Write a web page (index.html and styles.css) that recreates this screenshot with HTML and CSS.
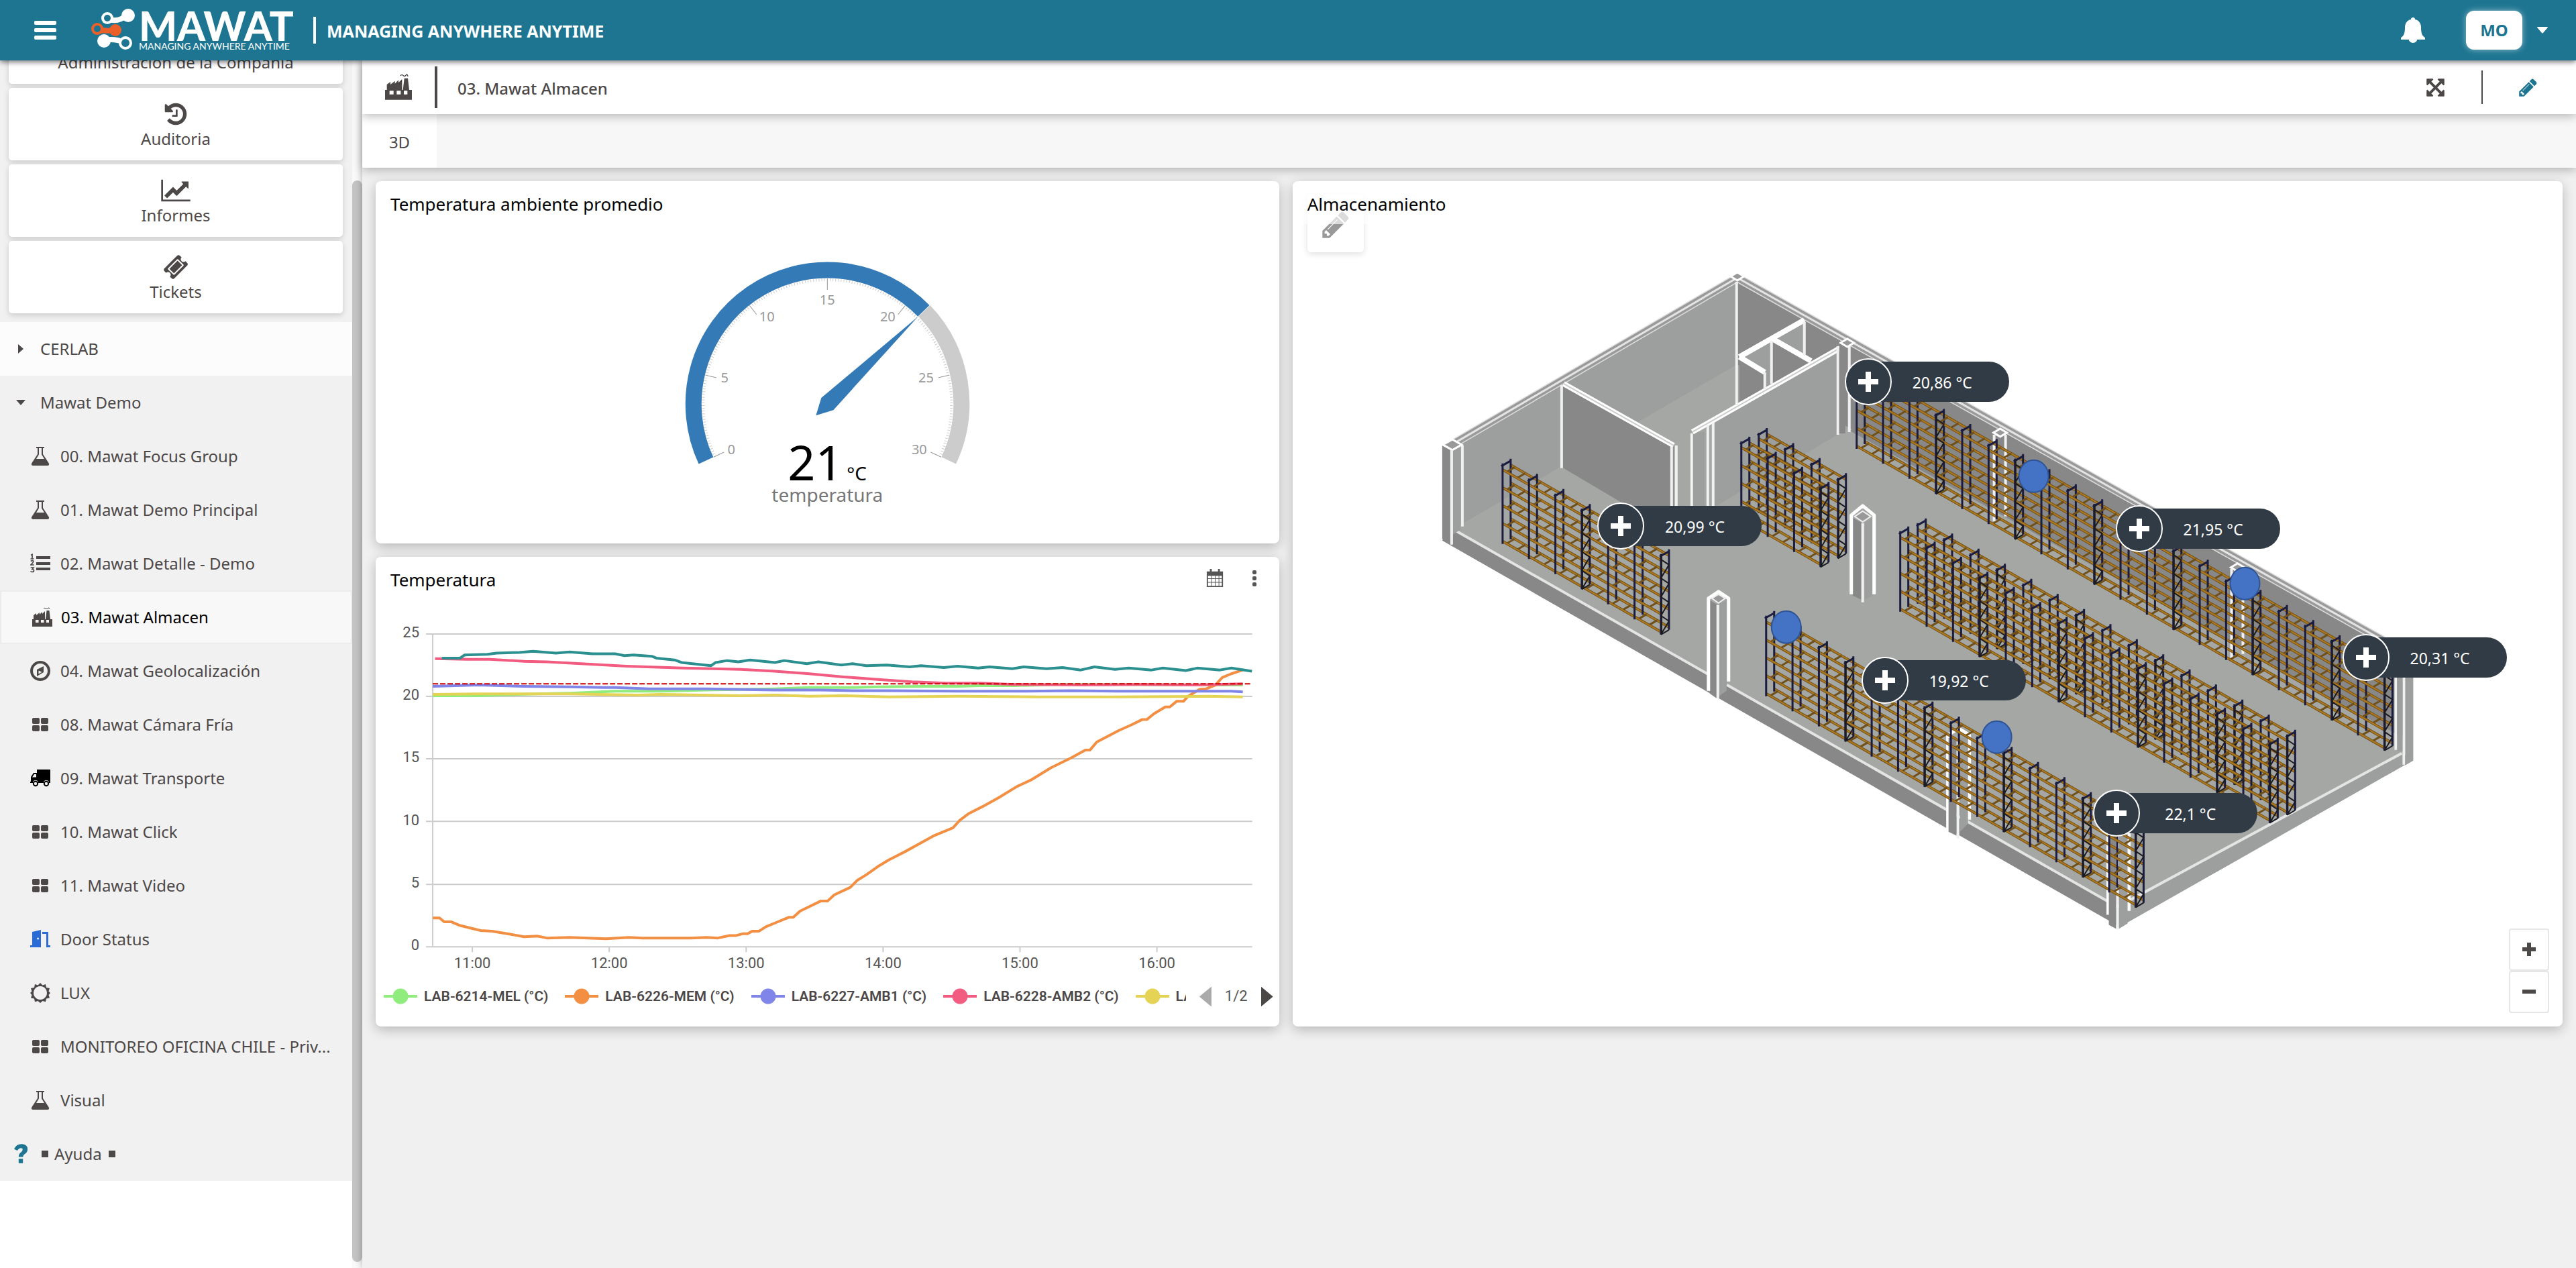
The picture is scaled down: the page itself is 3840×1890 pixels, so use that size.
FILE: index.html
```html
<!DOCTYPE html>
<html lang="es">
<head>
<meta charset="utf-8">
<title>Mawat - 03. Mawat Almacen</title>
<link rel="stylesheet" href="styles.css">
</head>
<body>
<svg class="defs" aria-hidden="true">
  <symbol id="i-pencil" viewBox="0 0 1792 1792"><path d="M491 1536l91-91-235-235-91 91v107h128v128h107zm523-928q0-22-22-22-10 0-17 7l-542 542q-7 7-7 17 0 22 22 22 10 0 17-7l542-542q7-7 7-17zm-54-192l416 416-832 832h-416v-416zm683 96q0 53-37 90l-166 166-416-416 166-165q36-38 90-38 53 0 91 38l235 234q37 39 37 91z"/></symbol>
  <symbol id="i-history" viewBox="0 0 1792 1792"><path d="M1664 896q0 156-61 298t-164 245-245 164-298 61q-172 0-327-72.5t-264-204.5q-7-10-6.5-22.5t8.5-20.5l137-138q10-9 25-9 16 2 23 12 73 95 179 147t225 52q104 0 198.5-40.5t163.5-109.5 109.5-163.5 40.5-198.5-40.5-198.5-109.5-163.5-163.5-109.5-198.5-40.5q-98 0-188 35.5t-160 101.5l137 138q31 30 14 69-17 40-59 40h-448q-26 0-45-19t-19-45v-448q0-42 40-59 39-17 69 14l130 129q107-101 244.5-156.5t284.5-55.5q156 0 298 61t245 164 164 245 61 298zm-640-288v448q0 14-9 23t-23 9h-320q-14 0-23-9t-9-23v-64q0-14 9-23t23-9h224v-352q0-14 9-23t23-9h64q14 0 23 9t9 23z"/></symbol>
  <symbol id="i-chart" viewBox="0 0 2048 1792"><path d="M2048 1536v128h-2048v-1536h128v1408h1920zm-128-1248v435q0 21-19.5 29.5t-35.5-7.5l-121-121-633 633q-10 10-23 10t-23-10l-233-233-416 416-192-192 585-585q10-10 23-10t23 10l233 233 464-464-121-121q-16-16-7.5-35.5t29.5-19.5h435q14 0 23 9t9 23z"/></symbol>
  <symbol id="i-ticket" viewBox="0 0 1792 1792"><path d="M1024 452l316 316-572 572-316-316zm-211 979l618-618q19-19 19-45t-19-45l-362-362q-18-18-45-18t-45 18l-618 618q-19 19-19 45t19 45l362 362q18 18 45 18t45-18zm889-637l-907 908q-37 37-90.5 37t-90.5-37l-126-126q56-56 56-136t-56-136-136-56-136 56l-125-126q-37-37-37-90.5t37-90.5l907-906q37-37 90.5-37t90.5 37l125 125q-56 56-56 136t56 136 136 56 136-56l126 125q37 37 37 90.5t-37 90.5z"/></symbol>
  <symbol id="i-expand" viewBox="0 0 1792 1792"><path d="M1411 541l-355 355 355 355 144-144q29-31 70-14 39 17 39 59v448q0 26-19 45t-45 19h-448q-42 0-59-40-17-39 14-69l144-144-355-355-355 355 144 144q31 30 14 69-17 40-59 40h-448q-26 0-45-19t-19-45v-448q0-42 40-59 39-17 69 14l144 144 355-355-355-355-144 144q-19 19-45 19-12 0-24-5-40-17-40-59v-448q0-26 19-45t45-19h448q42 0 59 40 17 39-14 69l-144 144 355 355 355-355-144-144q-31-30-14-69 17-40 59-40h448q26 0 45 19t19 45v448q0 42-39 59-13 5-25 5-26 0-45-19z"/></symbol>
  <symbol id="i-grid" viewBox="0 0 30 30"><rect x="3" y="5" width="11" height="9" rx="2"/><rect x="16" y="5" width="11" height="9" rx="2"/><rect x="3" y="16" width="11" height="9" rx="2"/><rect x="16" y="16" width="11" height="9" rx="2"/></symbol>
  <symbol id="i-flask" viewBox="0 0 30 30"><path d="M9 1h12v2h-2v9l8.500 13q2 4-2 4H4.500q-4 0-2-4L11 12V3H9zM13 3v9.600L9 19h12l-4-6.400V3z" fill-rule="evenodd"/></symbol>
  <symbol id="i-list" viewBox="0 0 30 30"><path d="M9 4h21v4H9zM9 13h21v4H9zM9 21h21v4H9z"/><g fill="none" stroke="currentColor" stroke-width="1.700"><path d="M1 2.500l2-1V8M.500 8h5M.800 11.500q4-2 4 .500 0 1-4 5h5M.800 21h4.200l-2 2.500q2.500 0 2.500 2t-2.500 2q-1.500 0-2.500-1"/></g></symbol>
  <symbol id="i-factory" viewBox="0 0 30 30"><path d="M0 29V18h2v-6l4-3v3l5-4v3l4-4v3l4-4v12h1L21.500 5h4L27 18h3v11zM5 19v4h4.500v-4zm8 0v4h4.500v-4zm8 0v4h4v-4z" fill-rule="evenodd"/><path d="M17 2q2-1.500 3.500 0t3-.5 2 1.500" fill="none" stroke="currentColor"/></symbol>
  <symbol id="i-compass" viewBox="0 0 30 30"><path d="M15 0a15 15 0 1 0 .01 0zM15 4a11 11 0 1 1-.01 0zM20 8v9l-10 6v-10zM12.500 14.500v5l5-2.700z" fill-rule="evenodd"/></symbol>
  <symbol id="i-truck" viewBox="0 0 30 30"><path d="M10 2h20v20h-2a4 4 0 0 0-8 0h-8a4 4 0 0 0-8 0H0v-2h1v-7l4-6h5zM9 9H6l-3 4.500h6z" fill-rule="evenodd"/><circle cx="8" cy="23" r="3.200" fill="none" stroke="currentColor" stroke-width="2"/><circle cx="24" cy="23" r="3.200" fill="none" stroke="currentColor" stroke-width="2"/></symbol>
  <symbol id="i-door" viewBox="0 0 30 30"><path d="M3 4l13-3v26H0v-3h3zM11.500 12.500a1.500 1.500 0 1 0 .01 3 1.500 1.500 0 1 0 0-3zM18 4h9v20h3v3h-6V7h-6z" fill-rule="evenodd"/></symbol>
  <symbol id="i-sun" viewBox="0 0 30 30"><path d="M15 0l3.500 3.500 4.500-1.500 1 5 5 1-1.500 4.500L30 15l-2.500 3L29 22.500l-5 1-1 4.800-4.500-1.300L15 30l-3.500-3L7 28.300l-1-4.800-5-1L2.500 18 0 15l2.500-2.500L1 8l5-1 1-5 4.500 1.500zM15 5a10 10 0 1 0 .01 0z" fill-rule="evenodd"/></symbol>
  <symbol id="i-question" viewBox="0 0 24 32"><path d="M1 8Q5 0 13 0q10 0 10 8.500 0 4.500-4.500 7.500-3 2-3 5H8.500q0-5 3.500-7.500 3-2 3-4.500 0-2.500-3-2.500-3 0-5.500 4zM8.500 24h7v7h-7z"/></symbol>
  <symbol id="i-calendar" viewBox="0 0 28 30"><path d="M1 4h5V0h3v4h10V0h3v4h5v25H1zM3 11v4h5v-4zm6 0v4h5v-4zm6 0v4h5v-4zm6 0v4h4v-4zM3 16v5h5v-5zm6 0v5h5v-5zm6 0v5h5v-5zm6 0v5h4v-5zM3 22v5h5v-5zm6 0v5h5v-5zm6 0v5h5v-5zm6 0v5h4v-5z" fill-rule="evenodd"/></symbol>
</svg>

<header class="topbar">
  <button class="menu-btn" aria-label="Menú"><span></span><span></span><span></span></button>
  <svg class="logo" viewBox="0 0 304 64" role="img" aria-label="Mawat">
    <g stroke-linecap="round" fill="none">
      <path d="M25 15Q40 21 52 11" stroke="#fff" stroke-width="8"/>
      <path d="M10 31Q24 34 36 32" stroke="#eb6029" stroke-width="8"/>
      <path d="M20 47Q36 44 50 50" stroke="#fff" stroke-width="8"/>
    </g>
    <circle cx="25" cy="14" r="9" fill="#fff"/><circle cx="25" cy="14" r="5" fill="#1d7591"/>
    <circle cx="56" cy="10" r="10" fill="#fff"/>
    <circle cx="10" cy="30" r="9" fill="#eb6029"/><circle cx="10" cy="30" r="5" fill="#1d7591"/>
    <circle cx="37" cy="32" r="9" fill="#eb6029"/>
    <circle cx="20" cy="48" r="10" fill="#fff"/>
    <circle cx="52" cy="51" r="10" fill="#fff"/><circle cx="52" cy="51" r="6" fill="#1d7591"/>
    <text class="logo-name" x="72" y="48">MAWAT</text>
    <text class="logo-sub" x="72" y="61">MANAGING ANYWHERE ANYTIME</text>
  </svg>
  <span class="topbar-rule"></span>
  <span class="slogan">MANAGING ANYWHERE ANYTIME</span>
  <button class="bell" aria-label="Notificaciones"><svg viewBox="0 0 36 38"><path d="M18 0c-2 0-3 1-3 3C9 4 6 9 6 15c0 9-2 13-6 15v3h36v-3c-4-2-6-6-6-15 0-6-3-11-9-12 0-2-1-3-3-3zM12 33a6 5 0 0 0 12 0z"/></svg></button>
  <button class="user">MO</button>
  <button class="caret" aria-label="Opciones de usuario"><svg viewBox="0 0 16 10"><path d="M1 0h14q2 0 0 2l-6 7q-1 1-2 0L1 2q-2-2 0-2z"/></svg></button>
</header>

<div class="shell">
  <aside class="sidebar">
    <div class="side-content">
      <div class="tiles">
        <a class="tile" href="#">Administración de la Compañía</a>
        <a class="tile" href="#"><svg><use href="#i-history"/></svg>Auditoria</a>
        <a class="tile" href="#"><svg><use href="#i-chart"/></svg>Informes</a>
        <a class="tile" href="#"><svg><use href="#i-ticket"/></svg>Tickets</a>
      </div>
      <nav class="tree">
        <a class="group light" href="#"><span class="tri right"></span>CERLAB</a>
        <a class="group" href="#"><span class="tri down"></span>Mawat Demo</a>
        <a class="item" href="#"><svg><use href="#i-flask"/></svg><span>00. Mawat Focus Group</span></a>
        <a class="item" href="#"><svg><use href="#i-flask"/></svg><span>01. Mawat Demo Principal</span></a>
        <a class="item" href="#"><svg><use href="#i-list"/></svg><span>02. Mawat Detalle - Demo</span></a>
        <a class="item current" href="#"><svg><use href="#i-factory"/></svg><span>03. Mawat Almacen</span></a>
        <a class="item" href="#"><svg><use href="#i-compass"/></svg><span>04. Mawat Geolocalización</span></a>
        <a class="item" href="#"><svg><use href="#i-grid"/></svg><span>08. Mawat Cámara Fría</span></a>
        <a class="item black" href="#"><svg><use href="#i-truck"/></svg><span>09. Mawat Transporte</span></a>
        <a class="item" href="#"><svg><use href="#i-grid"/></svg><span>10. Mawat Click</span></a>
        <a class="item" href="#"><svg><use href="#i-grid"/></svg><span>11. Mawat Video</span></a>
        <a class="item blue" href="#"><svg><use href="#i-door"/></svg><span>Door Status</span></a>
        <a class="item" href="#"><svg><use href="#i-sun"/></svg><span>LUX</span></a>
        <a class="item" href="#"><svg><use href="#i-grid"/></svg><span>MONITOREO OFICINA CHILE - Priv...</span></a>
        <a class="item" href="#"><svg><use href="#i-flask"/></svg><span>Visual</span></a>
        <a class="group help" href="#"><svg><use href="#i-question"/></svg><i></i>Ayuda<i></i></a>
      </nav>
    </div>
    <div class="scrollbar"><div class="thumb"></div></div>
  </aside>

  <main>
    <div class="page-head">
      <svg class="page-icon"><use href="#i-factory"/></svg>
      <span class="rule thick"></span>
      <h1>03. Mawat Almacen</h1>
      <button class="tool" aria-label="Pantalla completa"><svg><use href="#i-expand"/></svg></button>
      <span class="rule"></span>
      <button class="tool edit" aria-label="Editar"><svg><use href="#i-pencil"/></svg></button>
    </div>
    <div class="tabs"><button class="tab">3D</button></div>

    <div class="board">
      <section class="card gauge-card">
        <h2>Temperatura ambiente promedio</h2>
        <svg id="gauge" viewBox="560 334 1346 476">
          <path class="arc rest" d="M1377.400 463.300A199.500 199.500 0 0 1 1413.800 686.300"/>
          <path class="arc done" d="M1052.200 686.300A199.500 199.500 0 0 1 1376.500 463.400"/>
          <g id="ticks"></g>
          <path class="needle" d="M1368 472L1224 593L1216 619L1242 611Z"/>
          <text class="value" x="1174" y="716">21</text>
          <text class="unit" x="1262" y="716">°C</text>
          <text class="caption" x="1233" y="748">temperatura</text>
        </svg>
      </section>

      <section class="card chart-card">
        <h2>Temperatura</h2>
        <div class="card-tools">
          <button aria-label="Calendario"><svg><use href="#i-calendar"/></svg></button>
          <button class="kebab" aria-label="Más opciones"><span></span><span></span><span></span></button>
        </div>
        <svg id="chart" viewBox="560 894 1346 566"></svg>
        <div class="legend">
          <div class="legend-items">
            <button><i class="green"></i>LAB-6214-MEL (°C)</button>
            <button><i class="orange"></i>LAB-6226-MEM (°C)</button>
            <button><i class="violet"></i>LAB-6227-AMB1 (°C)</button>
            <button><i class="rose"></i>LAB-6228-AMB2 (°C)</button>
            <button><i class="yellow"></i>LAB-6229-AMB3 (°C)</button>
          </div>
          <button class="page prev" aria-label="Anterior"></button>
          <span>1/2</span>
          <button class="page next" aria-label="Siguiente"></button>
        </div>
      </section>

      <section class="card plan-card">
        <button class="plan-edit" aria-label="Editar plano"><svg><use href="#i-pencil"/></svg></button>
        <h2>Almacenamiento</h2>
        <div class="stage">
          <svg viewBox="1926 334 1894 1196" role="img" aria-label="Plano 3D del almacén">
            <!-- floor and outer walls -->
            <path fill="#a5a7a4" d="M2165 789V662L2589 414L3584 966V1125L3156 1372Z"/>
            <path fill="#9d9f9e" d="M2165 662L2589 414V543L2165 789Z"/>
            <path fill="#888" d="M2589 414L3582 966V1100L2753 640L2589 546Z"/>
            <path fill="#a5a7a4" d="M2589 543L2760 640L2589 740Z"/>
            <path fill="#888" d="M2162 787L3156 1350V1380L2149 806Z"/>
            <path fill="#9d9f9e" d="M3156 1350L3580 1121L3596 1134L3156 1384Z"/>
            <path class="edge" d="M2165 789L3156 1352L3580 1123"/>
            <!-- small rooms -->
            <path fill="#888" d="M2592 420L2689 478L2592 532ZM2643 506L2697 537L2640 572ZM2592 532L2630 555V580L2592 603ZM2689 480L2742 512L2697 537L2689 530Z"/>
            <path fill="#9d9f9e" d="M2643 506L2689 478V531ZM2592 532L2640 506V572L2630 578V555Z"/>
            <!-- partitions -->
            <path fill="#888" d="M2328 572L2494 666V795L2328 697Z"/>
            <path fill="#9d9f9e" d="M2553 630L2742 519V646L2553 757ZM2522 644H2540V764H2522Z"/>
            <path class="cap-out" d="M2163 663L2589 414L3586 974"/>
            <path class="cap-in" d="M2163 663L2589 414L3586 974"/>
            <path class="cap-line" d="M2163 663L2589 414L3586 974"/>
            <path class="wall-out" d="M2330 572L2494 664M2522 644L2742 519M2592 532L2689 477M2643 506L2699 538M2592 532L2630 555"/>
            <path class="wall-in" d="M2330 572L2494 664M2522 644L2742 519"/>
            <path class="post-line" d="M2327 574V698M2588 420V604M2689 480V530M2640 508V572M2630 555V580M2491 666V784M2498 664V784M2521 646V784M2545 634V784M2553 630V784M2739 516V648M2756 516V644M2179 664V785"/>
            <!-- corner and wall posts -->
            <path fill="#888" d="M2149 664L2162 671V811L2149 804ZM2741 518H2750V646H2741Z"/>
            <path fill="#9d9f9e" d="M2163 671L2176 664V790L2163 798Z"/>
            <path fill="#999" stroke="#fff" stroke-width="3" d="M2150 663L2164 655L2178 663L2164 671ZM2579 412L2589 406L2599 412L2589 418ZM2743 511L2753 505L2763 511L2753 517ZM2971 645L2981 639L2991 645L2981 651ZM3325 846L3335 840L3345 846L3335 852Z"/>
            <path class="post-line" d="M2972 648V777M2989 648V770M3326 848V984M3343 850V975M3571 1000V1118M3583 1000V1140M2163 671V812"/>
            <path fill="#9d9f9e" d="M3585 990H3597V1134L3585 1141ZM3573 1000H3581V1120H3573Z"/>
            <path class="column" d="M2903 1240V1096L2919 1086L2935 1096V1222M3142 1364V1220M3173 1358V1220"/>
            <path fill="#888" d="M2904 1100H2916V1246L2904 1240ZM3143 1220H3154V1385L3143 1379Z"/>
            <path fill="#9d9f9e" d="M2921 1100H2933V1228L2921 1240ZM3158 1220H3171V1377L3158 1385Z"/>
            <path class="post-line" d="M2918 1100V1250M3156 1220V1386"/>
            <g id="racks-back"></g>
            <!-- free-standing columns -->
            <path fill="#a5a7a4" d="M2759 768L2776 754L2793 768V886L2776 896L2759 886ZM2546 892L2561 880L2576 892V1017L2561 1040L2546 1030Z"/>
            <path fill="#888" d="M2761 772L2774 779V894L2761 888ZM2548 895L2558 901V1041L2548 1034Z"/>
            <path fill="#9d9f9e" d="M2779 779L2791 772V888L2779 894ZM2561 901L2573 895V1030L2561 1038Z"/>
            <path class="column" d="M2759 886V768L2776 754L2793 768V886M2546 1030V892L2561 882L2576 892V1016"/>
            <path class="post-line" d="M2776 780V898M2560 902V1041"/>
            <path class="thin" d="M2764 770L2776 762L2788 770L2776 778ZM2551 892L2561 886L2571 892L2561 899Z"/>
            <g id="racks-front"></g>
            <g class="beacon">
              <ellipse cx="2662" cy="935" rx="22" ry="24"/><ellipse cx="3031" cy="710" rx="22" ry="24"/>
              <ellipse cx="3346" cy="870" rx="22" ry="24"/><ellipse cx="2976" cy="1099" rx="22" ry="24"/>
            </g>
          </svg>
          <button class="pin" style="left:45.35%;top:19.65%"><i></i><span>20,86 °C</span></button>
          <button class="pin" style="left:25.87%;top:37.63%"><i></i><span>20,99 °C</span></button>
          <button class="pin" style="left:66.68%;top:37.96%"><i></i><span>21,95 °C</span></button>
          <button class="pin" style="left:84.53%;top:54.01%"><i></i><span>20,31 °C</span></button>
          <button class="pin" style="left:46.67%;top:56.86%"><i></i><span>19,92 °C</span></button>
          <button class="pin" style="left:64.89%;top:73.41%"><i></i><span>22,1 °C</span></button>
          <div class="zoom"><button class="plus" aria-label="Acercar"></button><button aria-label="Alejar"></button></div>
        </div>
      </section>
    </div>
  </main>
</div>
<script src="script.js"></script>
</body>
</html>
```
FILE: styles.css
```css
* { box-sizing: border-box; }
body {
  margin: 0;
  font-family: "Noto Sans", "Open Sans", sans-serif;
  font-size: 24px;
  line-height: 32px;
  color: #4d4848;
  background: #f1f1f1;
}
button { border: 0; padding: 0; background: none; font: inherit; color: inherit; cursor: pointer; }
a { color: inherit; text-decoration: none; }
svg { fill: currentColor; display: block; }
.defs { position: absolute; width: 0; height: 0; }

/* top bar */
.topbar {
  position: relative;
  z-index: 3;
  display: flex;
  align-items: center;
  height: 90px;
  padding: 0 42px 0 51px;
  color: #fff;
  background: #1d7591;
  box-shadow: 0 2px 8px rgba(0, 0, 0, .6);
}
.menu-btn { display: flex; flex-direction: column; gap: 5px; width: 33px; }
.menu-btn span { height: 6px; border-radius: 2px; background: #fff; }
.logo { width: 304px; height: 64px; margin-left: 51px; overflow: visible; }
.logo-name { font: 900 60px Lato, sans-serif; fill: #fff; }
.logo-sub { font: 400 14px Lato, sans-serif; fill: #fff; }
.topbar-rule { width: 4px; height: 40px; margin: 0 16px 0 28px; background: #fff; }
.slogan { flex: 1; padding-top: 2px; font-size: 25px; font-weight: 700; }
.bell svg { width: 36px; height: 38px; }
.user {
  width: 84px;
  height: 58px;
  margin: 0 22px 0 61px;
  border-radius: 12px;
  font-weight: 700;
  color: #1d7591;
  background: #fff;
  box-shadow: 0 0 10px rgba(255, 255, 255, .5);
}
.caret svg { width: 16px; height: 10px; }

/* frame */
.shell { display: flex; height: calc(100vh - 90px); min-height: 1500px; }
.sidebar { display: flex; flex: 0 0 540px; min-width: 0; background: #f1f1f1; }
.side-content {
  flex: 1;
  min-width: 0;
  display: flex;
  flex-direction: column;
  justify-content: flex-end;
  overflow: hidden;
  padding-bottom: 130px;
  background: linear-gradient(#f1f1f1, #f1f1f1) 0 0 / 100% calc(100% - 130px) no-repeat #fff;
}
.scrollbar { flex: none; width: 15px; padding: 179px 0 9px; background: #f9f9f9; }
.thumb { height: 100%; border-radius: 8px; background: #c3c3c3; }

.tiles { display: flex; flex-direction: column; gap: 6px; padding: 0 14px 13px 13px; }
.tile {
  flex: 0 0 108px;
  display: flex;
  flex-direction: column;
  align-items: center;
  justify-content: flex-end;
  gap: 2px;
  padding-bottom: 16px;
  border-radius: 5px;
  background: #fff;
  box-shadow: 0 3px 8px rgba(0, 0, 0, .16);
}
.tile svg { width: 44px; height: 38px; }

.tree { display: flex; flex-direction: column; }
.group, .item { display: flex; align-items: center; flex: 0 0 80px; }
.group { padding-left: 20px; }
.light { background: #fcfcfc; }
.tri { width: 40px; height: 14px; background: #4d4848; }
.tri.right { clip-path: polygon(7px 0, 15px 7px, 7px 14px); }
.tri.down { clip-path: polygon(4px 3px, 18px 3px, 11px 11px); }
.item { padding: 0 14px 0 45px; }
.item svg { flex: none; width: 30px; height: 30px; margin-right: 15px; }
.item span { overflow: hidden; white-space: nowrap; text-overflow: ellipsis; }
.current { padding-left: 46px; border: 2px solid #ececec; color: #000; background: #f8f8f8; }
.current svg { margin-right: 13px; color: #4d4848; }
.black svg { color: #000; }
.blue svg { color: #2a6bd6; }
.help svg { width: 22px; height: 30px; margin-right: 19px; color: #1d7591; }
.help i { width: 10px; height: 10px; margin: 0 9px 0 1px; background: #4d4848; }
.help i:last-child { margin-left: 10px; }

/* page head */
main { flex: 1; min-width: 0; background: #f0f0f0; box-shadow: 0 0 10px rgba(0, 0, 0, .3); }
.page-head, .tabs { position: relative; display: flex; align-items: center; height: 80px; box-shadow: 0 3px 14px rgba(0, 0, 0, .28); }
.page-head { z-index: 2; padding: 0 56px 0 34px; background: #fff; }
.page-icon { width: 40px; height: 40px; margin-right: 34px; }
.rule { width: 2px; height: 50px; background: #4d4848; }
.rule.thick { width: 4px; height: 62px; }
h1 { flex: 1; margin: 0 0 0 30px; padding-top: 3px; font-size: 24px; font-weight: 500; }
.tool svg { width: 31px; height: 31px; }
.page-head .tool { margin-right: 53px; }
.page-head .edit { margin: 0 0 0 52px; color: #1d7591; }
.tabs { z-index: 1; background: #f7f7f7; }
.tab { width: 111px; height: 80px; padding-top: 3px; background: #fff; }

/* board */
.board {
  display: grid;
  grid-template-columns: repeat(12, 1fr);
  grid-template-rows: auto auto;
  gap: 20px;
  padding: 20px;
  align-items: start;
}
.card { position: relative; border-radius: 8px; background: #fff; color: #000; box-shadow: 0 5px 18px rgba(0, 0, 0, .24); }
.gauge-card, .chart-card { grid-column: 1 / span 5; }
.plan-card { grid-column: 6 / span 7; grid-row: 1 / span 2; }
h2 { position: relative; margin: 0; height: 64px; padding: 17px 22px 0; font-size: 26px; font-weight: 400; line-height: 34px; }
.card > svg { width: 100%; }

/* gauge */
.arc { fill: none; stroke-width: 24; }
.done { stroke: #347ab7; }
.rest { stroke: #ccc; }
.needle { fill: #347ab7; }
.tick { stroke: #999; }
.tick.minor { stroke: #ccc; }
.tick-label { font-size: 20px; fill: #999; text-anchor: middle; }
.value { font-size: 72px; fill: #000; }
.unit { font-size: 28px; fill: #000; }
.caption { font-size: 28px; fill: #777; text-anchor: middle; }

/* chart */
.card-tools { position: absolute; top: 18px; right: 32px; display: flex; align-items: center; gap: 40px; color: #555; }
.card-tools svg { width: 28px; height: 28px; }
.kebab { display: flex; flex-direction: column; gap: 3px; width: 10px; padding: 0 2px; }
.kebab span { height: 6px; border-radius: 2px; background: #555; }
.axis { stroke: #ccc; stroke-width: 2; fill: none; }
.axis-label { font: 22px Roboto, sans-serif; fill: #555; }
.series { fill: none; stroke-width: 4; stroke-linejoin: round; }
.limit { stroke: #c00; stroke-width: 2; stroke-dasharray: 8 3; }
.legend {
  display: flex;
  align-items: center;
  gap: 20px;
  height: 50px;
  margin-bottom: 20px;
  padding: 0 9px 0 12px;
  font: 400 22px/26px Roboto, sans-serif;
  color: #555;
}
.legend-items { flex: 1; min-width: 0; display: flex; gap: 25px; overflow: hidden; font-size: 21px; font-weight: 600; color: #4d4848; }
.legend-items button { display: flex; align-items: center; flex: none; }
.legend-items i {
  width: 50px;
  height: 24px;
  margin-right: 10px;
  background: radial-gradient(circle, currentColor 11px, transparent 12px), linear-gradient(currentColor, currentColor) 0 50% / 100% 4px no-repeat;
}
.green { color: #90ed7d; }
.orange { color: #f28f43; }
.violet { color: #8085e9; }
.rose { color: #f15c80; }
.yellow { color: #e4d354; }
.page { width: 18px; height: 30px; }
.prev { background: #aaa; clip-path: polygon(100% 0, 100% 100%, 0 50%); }
.next { background: #4d4848; clip-path: polygon(0 0, 0 100%, 100% 50%); }

/* floor plan */
.stage { position: relative; }
.stage svg { width: 100%; }
.plan-card h2 { border-radius: 8px; background: rgba(255, 255, 255, .65); }
.plan-edit {
  position: absolute;
  top: 20px;
  left: 22px;
  width: 84px;
  height: 86px;
  border-radius: 5px;
  color: #999;
  background: #fff;
  box-shadow: 0 3px 10px rgba(0, 0, 0, .12);
}
.plan-edit svg { width: 46px; height: 46px; margin: 4px auto 0; }
.edge { fill: none; stroke: #e4e4e4; stroke-width: 4; }
.cap-out, .cap-in, .cap-line, .wall-out, .wall-in { fill: none; }
.cap-out { stroke: #dcdcdc; stroke-width: 13; }
.cap-in { stroke: #9a9a9a; stroke-width: 10; }
.cap-line { stroke: #e4e4e4; stroke-width: 3; }
.wall-out { stroke: #fff; stroke-width: 8; }
.wall-in { stroke: #ccc; stroke-width: 2; }
.post-line { fill: none; stroke: #f0f0f0; stroke-width: 4; }
.column { fill: none; stroke: #fff; stroke-width: 5; stroke-linejoin: round; }
.thin { fill: #999; stroke: #eee; stroke-width: 2; }
.beam-edge { fill: none; stroke: #70501a; stroke-width: 4; }
.beam { fill: none; stroke: #b07b1e; stroke-width: 2; }
.rung { fill: none; stroke: #70501a; stroke-width: 3; }
.upright { fill: none; stroke: #1b1d40; stroke-width: 3; }
.brace { fill: none; stroke: #1b1b24; stroke-width: 2; }
.beacon { fill: #4472c4; stroke: #2f5597; stroke-width: 2; }
.pin {
  position: absolute;
  display: flex;
  align-items: center;
  width: 245px;
  height: 60px;
  margin: -30px 0 0 -35px;
  border-radius: 30px;
  font-size: 23px;
  color: #fff;
  background: #313b45;
}
.pin i {
  flex: none;
  width: 70px;
  height: 70px;
  border: 2px solid #fff;
  border-radius: 50%;
  background: linear-gradient(#fff, #fff) center / 30px 8px no-repeat, linear-gradient(#fff, #fff) center / 8px 30px no-repeat, #313b45;
}
.pin span { flex: 1; padding: 3px 25px 0 0; }
.zoom { position: absolute; right: 20px; bottom: 20px; width: 60px; }
.zoom button {
  display: block;
  width: 60px;
  height: 63px;
  border: 2px solid #e6e6e6;
  border-radius: 4px;
  background: linear-gradient(#4d4848, #4d4848) center / 20px 6px no-repeat #fff;
}
.zoom .plus { background: linear-gradient(#4d4848, #4d4848) center / 20px 6px no-repeat, linear-gradient(#4d4848, #4d4848) center / 6px 20px no-repeat #fff; }
```
FILE: script.js
```js
const NS = 'http://www.w3.org/2000/svg';
function add(parent, tag, attrs, text) {
  const el = document.createElementNS(NS, tag);
  for (const k in attrs) el.setAttribute(k, attrs[k]);
  if (text !== undefined) el.textContent = text;
  parent.appendChild(el);
}

// Gauge scale: 0 to 30 over 230 degrees, thirty fine ticks to each labelled one.
const ticks = document.getElementById('ticks');
const labels = [[1090, 677], [1080, 570], [1143, 479], [1233, 454], [1323, 479], [1380, 570], [1370, 677]];
for (let i = 0; i <= 180; i++) {
  const major = i % 30 === 0;
  const a = (-115 + i * 230 / 180) * Math.PI / 180;
  const r = major ? 170 : 183;
  add(ticks, 'line', {
    class: major ? 'tick' : 'tick minor',
    x1: 1233 + 187 * Math.sin(a), y1: 602 - 187 * Math.cos(a),
    x2: 1233 + r * Math.sin(a), y2: 602 - r * Math.cos(a)
  });
  if (major) add(ticks, 'text', { class: 'tick-label', x: labels[i / 30][0], y: labels[i / 30][1] }, i / 6);
}

// Line chart. Series are [minute after 10:42, degrees].
const chart = document.getElementById('chart');
const X = m => 645 + m * 3.4;
const Y = v => 1411 - v * 18.66;
for (let v = 0; v <= 25; v += 5) {
  add(chart, 'path', { class: 'axis', d: `M635 ${Math.round(Y(v))}H1866` });
  add(chart, 'text', { class: 'axis-label', x: 625, y: Y(v) + 5, 'text-anchor': 'end' }, v);
}
add(chart, 'path', { class: 'axis', d: 'M645 944V1411' });
for (let h = 0; h < 6; h++) {
  const x = 704 + h * 204;
  add(chart, 'path', { class: 'axis', d: `M${x} 1411V1419` });
  add(chart, 'text', { class: 'axis-label', x: x, y: 1443, 'text-anchor': 'middle' }, `${11 + h}:00`);
}
const series = [
  ['#90ed7d', [[0, 20.05], [20, 20.05], [45, 20.2], [60, 20.25], [80, 20.4], [100, 20.4], [120, 20.5], [150, 20.6], [165, 20.7], [185, 20.7], [195, 20.75], [215, 20.8], [230, 20.8], [240, 20.85], [255, 20.85], [275, 20.95], [300, 20.95], [330, 20.9], [355, 20.9]]],
  ['#f28f43', [[0, 2.3], [3, 2.3], [5, 2], [8, 2], [12, 1.7], [21, 1.3], [26, 1.25], [34, 1], [40, .8], [46, .85], [50, .7], [60, .75], [76, .65], [86, .75], [92, .7], [113, .7], [120, .75], [125, .7], [130, .9], [133, .9], [136, 1.05], [138, 1.05], [140, 1.25], [143, 1.25], [146, 1.6], [150, 1.9], [156, 2.35], [158, 2.35], [161, 2.85], [170, 3.65], [173, 3.65], [176, 4.15], [183, 4.75], [186, 5.3], [190, 5.75], [195, 6.4], [200, 6.95], [207, 7.6], [214, 8.3], [220, 8.9], [228, 9.5], [231, 10.1], [235, 10.65], [241, 11.2], [248, 11.9], [256, 12.8], [262, 13.3], [271, 14.3], [280, 15.1], [286, 15.7], [288, 15.7], [291, 16.35], [301, 17.3], [306, 17.7], [311, 18.15], [313, 18.15], [316, 18.6], [321, 19.15], [323, 19.15], [326, 19.6], [329, 19.6], [331, 20], [336, 20.55], [339, 20.6], [343, 20.9], [346, 21.5], [350, 21.8], [355, 22.1]]],
  ['#8085e9', [[0, 20.8], [20, 20.9], [40, 20.8], [60, 20.75], [75, 20.7], [80, 20.7], [95, 20.6], [120, 20.6], [150, 20.5], [170, 20.5], [185, 20.45], [200, 20.45], [230, 20.4], [260, 20.4], [280, 20.45], [300, 20.4], [330, 20.4], [350, 20.4], [355, 20.35]]],
  ['#f15c80', [[1, 23], [15, 22.95], [25, 22.95], [40, 22.8], [50, 22.75], [65, 22.6], [85, 22.4], [110, 22.25], [135, 22.15], [150, 22], [165, 21.8], [180, 21.55], [195, 21.35], [210, 21.15], [225, 21.05], [240, 21.05], [255, 20.95], [285, 20.9], [310, 20.95], [335, 20.9], [355, 21]]],
  ['#e4d354', [[0, 20.15], [20, 20.2], [60, 20.2], [90, 20.1], [100, 20.15], [135, 20.05], [150, 20.1], [165, 20], [180, 20.05], [200, 19.95], [230, 20], [265, 19.95], [300, 19.95], [340, 20], [355, 19.95]]],
  ['#2b908f', [[4, 23.05], [12, 23.05], [14, 23.3], [24, 23.35], [28, 23.45], [38, 23.5], [44, 23.6], [54, 23.45], [60, 23.55], [70, 23.4], [80, 23.4], [84, 23.25], [88, 23.3], [96, 23.2], [98, 23.05], [106, 22.9], [109, 22.7], [122, 22.45], [124, 22.7], [129, 22.85], [134, 22.75], [139, 22.9], [150, 22.7], [154, 22.85], [164, 22.6], [169, 22.75], [179, 22.5], [184, 22.6], [190, 22.45], [199, 22.5], [209, 22.35], [214, 22.45], [224, 22.3], [230, 22.4], [239, 22.25], [244, 22.35], [254, 22.2], [259, 22.35], [269, 22.2], [276, 22.3], [284, 22.1], [290, 22.35], [299, 22.15], [305, 22.25], [315, 22.1], [320, 22.25], [330, 22.05], [335, 22.25], [345, 22.1], [350, 22.25], [359, 22]]]
];
for (const [color, points] of series) {
  add(chart, 'polyline', { class: 'series', stroke: color, points: points.map(p => `${X(p[0]).toFixed(1)},${Y(p[1]).toFixed(1)}`).join(' ') });
}
add(chart, 'path', { class: 'limit', d: `M645 ${Y(21)}H1866` });

// Pallet racking: five beam levels, one bay is 39.35 x 22.5, every third frame is braced.
function rack(parent, x, y, bays) {
  const BX = 39.35, BY = 22.5, DX = 12, DY = -7, H = 120;
  const ex = x + bays * BX, ey = y + bays * BY;
  let back = '', backPosts = '', rungs = '', front = '', posts = '', braces = '';
  for (let l = 0; l < 5; l++) {
    const d = -4 - l * 26.7;
    back += `M${x + DX} ${y + d + DY}L${ex + DX} ${ey + d + DY}`;
    front += `M${x} ${y + d}L${ex} ${ey + d}`;
    for (let b = 0; b < bays; b++) {
      for (const f of [.15, .55]) rungs += `M${x + (b + f) * BX} ${y + (b + f) * BY + d}l${DX} ${DY}`;
    }
  }
  for (let p = 0; p <= bays; p++) {
    const px = x + p * BX, py = y + p * BY;
    backPosts += `M${px + DX} ${py + DY}v${-H}`;
    posts += `M${px} ${py}v${-H}m-2 4l${DX + 2} ${DY - 1}`;
    if ((p && p % 3 === 0) || p === bays) {
      braces += `M${px + 1} ${py}v${-H}M${px} ${py}`;
      for (let s = 0; s < 8; s++) braces += s % 2 ? `l${-DX} ${-8}` : `l${DX} ${-20}`;
      braces += `M${px} ${py}l${DX} ${DY}`;
    }
  }
  add(parent, 'path', { class: 'beam-edge', d: back });
  add(parent, 'path', { class: 'beam', d: back });
  add(parent, 'path', { class: 'upright', d: backPosts });
  add(parent, 'path', { class: 'rung', d: rungs });
  add(parent, 'path', { class: 'beam-edge', d: front });
  add(parent, 'path', { class: 'beam', d: front });
  add(parent, 'path', { class: 'upright', d: posts });
  add(parent, 'path', { class: 'brace', d: braces });
}
const far = document.getElementById('racks-back');
const near = document.getElementById('racks-front');
rack(far, 2767, 669, 20);
rack(far, 2621, 765, 3);
rack(far, 2595, 778, 3);
rack(far, 2239, 811, 6);
rack(near, 2858, 900, 14);
rack(near, 2832, 912, 14);
rack(near, 2632, 1038, 14);
```
